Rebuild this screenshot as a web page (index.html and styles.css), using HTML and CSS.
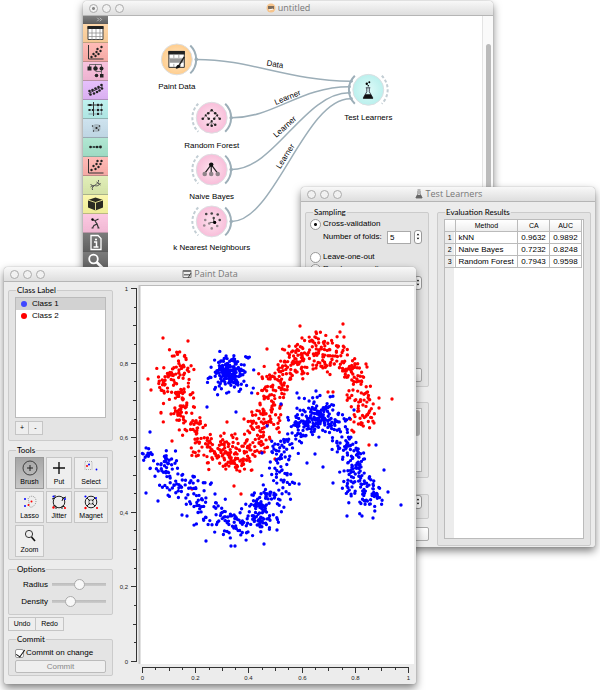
FILE: index.html
```
<!DOCTYPE html>
<html lang="en">
<head>
<meta charset="utf-8">
<title>untitled</title>
<link rel="stylesheet" href="styles.css">
</head>
<body>
<main class="desktop">

<section class="window window-canvas">
  <header class="titlebar">
    <div class="lights"><i class="edited"></i><i></i><i></i></div>
    <h1><svg class="title-icon" viewBox="0 0 10 10"><circle cx="5" cy="5" r="4.5" fill="#f6c48c"/><path d="M2 3h6v3H2z" fill="#7d6c5c"/><path d="M3 7l4-1" stroke="#fff"/></svg>untitled</h1>
  </header>
  <div class="canvas-body">
    <nav class="toolbox">
      <button class="expand" aria-label="Expand"><svg viewBox="0 0 24 8"><path d="M14 2l2 2-2 2M17 2l2 2-2 2" fill="none" stroke="#ccc"/></svg></button>
      <button class="orange" aria-label="Data table"><svg viewBox="0 0 24 18"><path d="M4.500 2.500h15v13h-15z" fill="#fff" stroke="#444"/><path d="M4 2h16v3H4z" fill="#222"/><path d="M4 9h16M4 12.500h16M8.500 5v11M12.500 5v11M16.500 5v11" stroke="#888" stroke-width=".7"/></svg></button>
      <button class="red" aria-label="Scatter"><svg viewBox="0 0 24 18"><path d="M5 2v14h15" fill="none" stroke="#333"/><g class="dots"><circle cx="8" cy="14" r="1.200"/><circle cx="10" cy="11" r="1.200"/><circle cx="12" cy="13" r="1.200"/><circle cx="13" cy="9" r="1.200"/><circle cx="15" cy="11" r="1.200"/><circle cx="14" cy="6" r="1.200"/><circle cx="17" cy="8" r="1.200"/><circle cx="18" cy="4" r="1.200"/></g></svg></button>
      <button class="pink" aria-label="Tree"><svg viewBox="0 0 24 18"><path d="M6 5V2.500h12V5M12 2v4M12 9.500h6v4M18 6v4" fill="none" stroke="#555" stroke-width=".8"/><g class="dots"><path d="M4 4.500h4v4H4zM16.500 12h3.500v3.500h-3.500z"/><circle cx="12" cy="6.500" r="2.200"/><circle cx="18" cy="6.500" r="2"/><circle cx="13" cy="13.500" r="1.800"/></g></svg></button>
      <button class="violet" aria-label="Regression"><svg viewBox="0 0 24 18"><path d="M5 12.500L19 5.500" stroke="#222" stroke-width=".8"/><g class="dots"><circle cx="6" cy="10" r="1.300"/><circle cx="7" cy="13.500" r="1.300"/><circle cx="9" cy="9" r="1.300"/><circle cx="10.500" cy="12.500" r="1.300"/><circle cx="12" cy="7.500" r="1.300"/><circle cx="13.500" cy="11" r="1.300"/><circle cx="15" cy="6" r="1.300"/><circle cx="16" cy="9.500" r="1.300"/><circle cx="18" cy="4" r="1.300"/><circle cx="18.500" cy="7.500" r="1.300"/></g></svg></button>
      <button class="cyan" aria-label="Distances"><svg viewBox="0 0 24 18"><path d="M4 5h15M10 2v14" stroke="#333"/><path d="M5 10h14M5 14h14M14.500 3v12M18 3v12" stroke="#556" stroke-width=".5"/><g class="dots"><path d="M5 4h3v2H5zM8.500 9h2v2h-2zM13.500 4h2v2h-2zM17 4h2v2h-2zM13.500 9h2v2h-2zM17 9h2v2h-2zM13.500 13h2v2h-2zM5 9h2v2H5z"/></g></svg></button>
      <button class="blue" aria-label="Clusters"><svg viewBox="0 0 24 18"><circle cx="13" cy="9" r="4" fill="#a9bac4"/><g class="dots"><circle cx="9" cy="7" r=".7"/><circle cx="10" cy="12" r=".7"/><circle cx="13" cy="9" r="1.100"/><circle cx="16" cy="7" r=".8"/><circle cx="15" cy="11" r=".7"/></g></svg></button>
      <button class="green" aria-label="Sequence"><svg viewBox="0 0 24 18"><path d="M7 9h10" stroke="#366" stroke-width=".8"/><g class="dots"><circle cx="7" cy="9" r="1.300"/><circle cx="10.500" cy="9" r=".9"/><circle cx="13.500" cy="9" r="1.300"/><circle cx="17" cy="9" r="1.400"/></g></svg></button>
      <button class="red" aria-label="Plot"><svg viewBox="0 0 24 18"><path d="M5 2v14h15" fill="none" stroke="#333"/><g class="dots"><circle cx="8" cy="13" r="1.200"/><circle cx="10" cy="9" r="1.200"/><circle cx="12" cy="12" r="1.200"/><circle cx="13" cy="7" r="1.200"/><circle cx="15" cy="10" r="1.200"/><circle cx="14" cy="4" r="1.200"/><circle cx="17" cy="7" r="1.200"/><circle cx="18" cy="4" r="1.200"/></g></svg></button>
      <button class="lime" aria-label="Genes"><svg viewBox="0 0 24 18"><path d="M7 11c4-4 6 2 10-4M9 14c-2-5 7-5 6-10M7 8l3 3M13 6l4 3" fill="none" stroke="#555" stroke-width="1"/></svg></button>
      <button class="yellow" aria-label="Box"><svg viewBox="0 0 24 18"><path d="M4.500 5L12 2.500 19.500 5v7.500L12 15.500l-7.500-3z" fill="#2a2a22"/><path d="M4.500 5l7.500 2.500L19.500 5M12 7.500v8" fill="none" stroke="#f0ec9a" stroke-width=".9"/></svg></button>
      <button class="rose" aria-label="Prototypes"><svg viewBox="0 0 24 18"><path d="M9 6l3 .5 3-1.500M11.500 7l2 3-3 1.500-1.500 2.500M13.500 10l1.500 4M8 14h2M14 14h2" fill="none" stroke="#333" stroke-width="1.200"/><circle cx="9" cy="5.500" r="1.200"/></svg></button>
      <button class="dark" aria-label="Information"><svg viewBox="0 0 24 18"><path d="M7.500 2.500h7l3 3v11h-10z" fill="none" stroke="#fff" stroke-width="1.300"/><path d="M10.500 9H13v4.500M10 14h5" fill="none" stroke="#fff" stroke-width="1.500"/><circle cx="12.500" cy="6.500" r="1.100" fill="#fff"/></svg></button>
      <button class="dark" aria-label="Search"><svg viewBox="0 0 24 18"><circle cx="10" cy="7" r="4.300" fill="none" stroke="#fff" stroke-width="1.800"/><path d="M13 10l6 6" stroke="#fff" stroke-width="2.600"/></svg></button>
    </nav>
    <svg class="scheme" viewBox="108 16 375 264" role="img" aria-label="Workflow">
      <defs>
        <radialGradient id="go"><stop offset="0" stop-color="#ffe9cb"/><stop offset="1" stop-color="#ffcd8d"/></radialGradient>
        <radialGradient id="gp"><stop offset="0" stop-color="#fde4ef"/><stop offset="1" stop-color="#f8bdd9"/></radialGradient>
        <radialGradient id="gc"><stop offset="0" stop-color="#dffaf8"/><stop offset="1" stop-color="#baf0ed"/></radialGradient>
      </defs>
      <g class="links">
        <path d="M197 59.500C250 59.500 290 81 351 81.500"/>
        <path d="M232 118C275 118 300 87 350 87"/>
        <path d="M232 170C275 170 305 93 350 93"/>
        <path d="M232 222C275 222 305 99 351 99"/>
      </g>
      <g class="node-label">
        <text x="275" y="67" transform="rotate(9 275 67)">Data</text>
        <text x="289" y="100" transform="rotate(-22 289 100)">Learner</text>
        <text x="287" y="129" transform="rotate(-42 287 129)">Learner</text>
        <text x="288" y="158" transform="rotate(-58 288 158)">Learner</text>
      </g>
      <g class="disc">
        <circle cx="177" cy="59.500" r="15.500" fill="url(#go)"/>
        <circle cx="212" cy="118" r="15.500" fill="url(#gp)"/>
        <circle cx="212" cy="170" r="15.500" fill="url(#gp)"/>
        <circle cx="212" cy="222" r="15.500" fill="url(#gp)"/>
        <circle cx="369" cy="90" r="15.500" fill="url(#gc)"/>
      </g>
      <g class="arc">
        <path d="M190.500 45.500a19.500 19.500 0 0 1 0 28"/><path d="M225.500 104a19.500 19.500 0 0 1 0 28"/><path d="M225.500 156a19.500 19.500 0 0 1 0 28"/><path d="M225.500 208a19.500 19.500 0 0 1 0 28"/><path d="M355.500 76a19.500 19.500 0 0 0 0 28"/>
      </g>
      <g class="arc dashed">
        <path d="M198.500 104a19.500 19.500 0 0 0 0 28"/><path d="M198.500 156a19.500 19.500 0 0 0 0 28"/><path d="M198.500 208a19.500 19.500 0 0 0 0 28"/><path d="M382.500 76a19.500 19.500 0 0 1 0 28"/>
      </g>
      <g class="ports"><circle cx="196.500" cy="59.500" r="1.800"/><circle cx="231.500" cy="118" r="1.800"/><circle cx="231.500" cy="170" r="1.800"/><circle cx="231.500" cy="222" r="1.800"/><circle cx="352" cy="81.500" r="1.500"/><circle cx="350" cy="87" r="1.500"/><circle cx="350" cy="93" r="1.500"/><circle cx="352" cy="99" r="1.500"/></g>
      <g>
        <path d="M169 51.500h15.500v16H169z" fill="#fff" stroke="#333"/><path d="M168.500 51h16.500v3.500h-16.500z" fill="#222"/><path d="M169.500 59h14.500v4h-14.500z" fill="#999"/><path d="M169 58.500h15M174 54v4M179 54v4M174 64v3" stroke="#888" stroke-width=".7"/><path d="M184.500 57l-5 8" stroke="#222" stroke-width="1.500"/><path d="M176 69c0-2 1-4 3-4l2 1c-1 2-3 3-5 3z" fill="#111"/>
      </g>
      <g fill="none" stroke="#555" stroke-width=".7"><path d="M209 113l3-2.500 3 2.500M203 119l3-3 3 3M214 119l3-3 3 3M208 125l3.500-3 3.500 3M211.500 122v4"/></g>
      <g class="dots"><circle cx="212" cy="110.500" r="1.200"/><circle cx="208.500" cy="113.500" r="1.300"/><circle cx="215.500" cy="113.500" r="1.300"/><circle cx="206" cy="115.500" r="1.100"/><circle cx="203" cy="119" r="1.300"/><circle cx="209" cy="119" r="1.300"/><circle cx="217.500" cy="115.500" r="1.100"/><circle cx="214.500" cy="119" r="1.300"/><circle cx="220" cy="119" r="1.300"/><circle cx="212" cy="121.500" r="1.100"/><circle cx="208" cy="125" r="1.300"/><circle cx="212" cy="126" r="1.300"/><circle cx="215.500" cy="125" r="1.300"/></g>
      <path d="M211.500 165l-6 8M211.500 165v8M211.500 165l6 8" stroke="#222" stroke-width="1.200"/><circle cx="211.500" cy="165" r="2.200" fill="#111"/><g fill="#8f8389"><circle cx="205" cy="174.500" r="2.300"/><circle cx="211.500" cy="174.500" r="2.300"/><circle cx="218" cy="174.500" r="2.300"/></g>
      <path d="M214 218v5h-4" fill="none" stroke="#333" stroke-width=".8"/><g fill="#444"><circle cx="206.500" cy="214.500" r="1.300"/><circle cx="212" cy="214" r="1.300"/><circle cx="218" cy="215" r="1.300"/><circle cx="220" cy="220.500" r="1.300"/><circle cx="214" cy="218.500" r="1.200"/></g><circle cx="215" cy="223" r="1.600"/><g fill="#94878d"><circle cx="205.500" cy="220.500" r="1.300"/><circle cx="209.500" cy="224" r="1.300"/><circle cx="204.500" cy="226" r="1.300"/><circle cx="212" cy="229" r="1.300"/><circle cx="217.500" cy="226.500" r="1.300"/></g>
      <path d="M366.500 88h4.500M367.500 88v4l-3.500 6h9.500l-3.500-6v-4" fill="none" stroke="#334" stroke-width=".9"/><path d="M366 94.500h5.500l2.500 4.500h-10.500z" fill="#111"/><circle cx="367.500" cy="84" r="1.200"/><circle cx="370" cy="82.500" r="1"/><circle cx="369" cy="86" r=".8"/>
      <g class="node-label">
        <text x="177" y="89">Paint Data</text><text x="212" y="148">Random Forest</text><text x="212" y="200">Naive Bayes</text><text x="212" y="251">k Nearest Neighbours</text><text x="369" y="120">Test Learners</text>
      </g>
    </svg>
    <div class="scrollbar"><div class="thumb"></div></div>
  </div>
</section>

<section class="window window-test">
  <header class="titlebar">
    <div class="lights"><i></i><i></i><i></i></div>
    <h2><svg class="title-icon" viewBox="0 0 10 10"><path d="M3.500 1h3M4 2v3L2 9h6L6 5V2" fill="none" stroke="#777"/><path d="M3 6h4l1.500 3h-7z" fill="#666"/></svg>Test Learners</h2>
  </header>
  <div class="test-body">
    <div class="test-options">
      <fieldset class="sampling">
        <legend>Sampling</legend>
        <label class="option"><input type="radio" name="sampling" checked>Cross-validation</label>
        <div class="folds"><label for="folds">Number of folds:</label><input id="folds" type="text" value="5"><button class="spin" aria-label="Change folds"><svg viewBox="0 0 7 13"><path d="M3.500 3l1.500 2H2zM3.500 10L2 8h3z"/></svg></button></div>
        <label class="option"><input type="radio" name="sampling">Leave-one-out</label>
        <label class="option"><input type="radio" name="sampling">Random sampling</label>
        <button class="spin" aria-label="Change repeats"><svg viewBox="0 0 7 13"><path d="M3.500 3l1.500 2H2zM3.500 10L2 8h3z"/></svg></button>
        <button class="push apply" aria-label="Apply"></button>
      </fieldset>
      <fieldset class="target"><div class="target-list"><div class="thumb"></div></div></fieldset>
      <fieldset class="criteria"><button class="spin" aria-label="Change class"><svg viewBox="0 0 7 13"><path d="M3.500 3l1.500 2H2zM3.500 10L2 8h3z"/></svg></button></fieldset>
      <button class="push" aria-label="Report"></button>
    </div>
    <fieldset class="results">
      <legend>Evaluation Results</legend>
      <div class="table-frame">
        <table>
          <thead><tr><th class="num"></th><th>Method</th><th>CA</th><th>AUC</th></tr></thead>
          <tbody>
            <tr><th class="num">1</th><td>kNN</td><td>0.9632</td><td>0.9892</td></tr>
            <tr><th class="num">2</th><td>Naive Bayes</td><td>0.7232</td><td>0.8248</td></tr>
            <tr><th class="num">3</th><td>Random Forest</td><td>0.7943</td><td>0.9598</td></tr>
          </tbody>
        </table>
      </div>
    </fieldset>
  </div>
</section>

<section class="window window-paint">
  <header class="titlebar">
    <div class="lights"><i></i><i></i><i></i></div>
    <h2><svg class="title-icon" viewBox="0 0 10 10"><path d="M1 1.500h8v7H1z" fill="#eee" stroke="#777"/><path d="M1 1h8v2H1zM2 5h6v1.500H2z" fill="#777"/><path d="M9 4L6 9" stroke="#444"/></svg>Paint Data</h2>
  </header>
  <div class="paint-body">
    <aside class="controls">
      <fieldset class="classes">
        <legend>Class Label</legend>
        <ul><li class="selected"><span class="dot dot-blue"></span>Class 1</li><li><span class="dot dot-red"></span>Class 2</li></ul>
        <div class="joined"><button>+</button><button>-</button></div>
      </fieldset>
      <fieldset class="tools">
        <legend>Tools</legend>
        <button class="active"><svg viewBox="0 0 16 16"><circle cx="8" cy="8" r="7" fill="none" stroke="#333" stroke-width=".9"/><path d="M8 5v6M5 8h6" stroke="#222"/></svg>Brush</button>
        <button><svg viewBox="0 0 16 16"><path d="M8 2v12M2 8h12" stroke="#111" stroke-width="1.400"/></svg>Put</button>
        <button><svg viewBox="0 0 16 16"><path d="M2 1.500h7v8H2z" fill="none" stroke="#aaa" stroke-dasharray="1 1"/><circle cx="4" cy="6" r="1" fill="red"/><circle cx="6" cy="4.500" r="1" fill="blue"/><circle cx="13.500" cy="9.500" r=".9" fill="blue"/></svg>Select</button>
        <button><svg viewBox="0 0 16 16"><path d="M6 5c1-4 8-4 8 2 0 4-4 7-6 6-2-2 0-4-2-8z" fill="none" stroke="#999" stroke-dasharray="1 1"/><g fill="blue"><circle cx="3" cy="5" r="1"/><circle cx="3" cy="12" r="1"/></g><g fill="red"><circle cx="9.500" cy="7.500" r="1"/><circle cx="6.500" cy="11" r="1"/></g></svg>Lasso</button>
        <button><svg viewBox="0 0 16 16"><circle cx="8" cy="8" r="5.800" fill="none" stroke="#222"/><path d="M1 5l3-1V1M15 3l-3 1-1 3M2 12h3v3M14 13l-3-1v3" fill="none" stroke="#222"/><g fill="blue"><circle cx="2.500" cy="2.500" r="1.100"/><circle cx="14" cy="5" r="1"/></g><g fill="red"><circle cx="2.500" cy="13.500" r="1.200"/><circle cx="14" cy="14" r="1.100"/></g></svg>Jitter</button>
        <button><svg viewBox="0 0 16 16"><circle cx="8" cy="8" r="5.800" fill="none" stroke="#222"/><path d="M4 4l3 3M12 4L9 7M4 12l3-3M12 12L9 9" fill="none" stroke="#222"/><path d="M7 5v2H5M9 5v2h2M5 9h2v2M11 9H9v2" fill="none" stroke="#222" stroke-width=".6"/><g fill="blue"><circle cx="2.500" cy="2.500" r="1.100"/><circle cx="13" cy="4" r="1"/></g><g fill="red"><circle cx="2.500" cy="14" r="1.200"/><circle cx="14" cy="14" r="1.100"/></g></svg>Magnet</button>
        <button><svg viewBox="0 0 16 16"><circle cx="7" cy="6" r="3.600" fill="none" stroke="#333"/><path d="M9.500 9l3.500 4" stroke="#111" stroke-width="1.700"/></svg>Zoom</button>
      </fieldset>
      <fieldset class="options">
        <legend>Options</legend>
        <label for="radius">Radius</label><input id="radius" type="range" min="0" max="100" value="50">
        <label for="density">Density</label><input id="density" type="range" min="0" max="100" value="30">
      </fieldset>
      <div class="joined history"><button>Undo</button><button>Redo</button></div>
      <fieldset class="commit">
        <legend>Commit</legend>
        <label><input type="checkbox" checked>Commit on change</label>
        <button class="push" disabled>Commit</button>
      </fieldset>
    </aside>
    <svg class="plot" id="plot" viewBox="114 282 302 402" role="img" aria-label="Painted data">
      <path d="M139 285h275v379H139z" fill="#fff"/>
      <path d="M139 285.500h275" stroke="#bbb"/>
      <path d="M139.500 285v379" stroke="#c4c4c4" stroke-width="2"/>
    </svg>
  </div>
</section>

</main>
<script src="plot.js"></script>
</body>
</html>
```
FILE: styles.css
```
* { box-sizing: border-box; }
body { margin: 0; background: #fff; color: #000; font-family: "Liberation Sans", Arial, sans-serif; font-size: 8px; line-height: 10px; }
button, input { font: inherit; color: inherit; margin: 0; padding: 0; }
button svg { display: block; }
.desktop { position: relative; min-height: 690px; height: 100vh; overflow: hidden; }

.window { position: absolute; display: flex; flex-direction: column; background: #ececec; border-radius: 4px 4px 2px 2px; box-shadow: 0 0 1px #777, 0 4px 9px rgba(0, 0, 0, .5); overflow: hidden; }
.window-canvas { top: 1px; left: 83px; right: 107px; height: 278px; background: #fff; }
.window-test { top: 187px; left: 301px; right: 5px; bottom: 143px; }
.window-paint { top: 267px; left: 4px; right: 184px; bottom: 6px; }

.titlebar { display: flex; align-items: center; flex: none; height: 15px; padding: 0 6px; background: linear-gradient(#f8f8f8, #dedede); border-bottom: 1px solid #b5b5b5; }
.titlebar h1, .titlebar h2 { display: flex; align-items: center; justify-content: center; flex: 1; gap: 2px; margin: 0 38px 0 0; color: #777; font: 9px/12px "Open Sans", sans-serif; }
.title-icon { width: 10px; height: 10px; }
.lights { display: flex; flex: none; gap: 4px; width: 38px; }
.lights i { width: 9px; height: 9px; border: 1px solid #aaa; border-radius: 50%; background: #f1f1f1; }
.lights .edited { background: radial-gradient(#888 1px, #f1f1f1 2px); }

.canvas-body { display: flex; flex: 1; min-height: 0; }
.toolbox { flex: none; width: 25px; }
.toolbox button { display: block; width: 100%; height: 19px; border: 0; border-bottom: 1px solid rgba(0, 0, 0, .25); background-image: linear-gradient(rgba(255, 255, 255, .15), rgba(0, 0, 0, .04)); }
.toolbox .expand { height: 8px; background-color: #686868; }
.toolbox svg { width: 100%; height: 100%; }
.dots { fill: #222; }
.orange { background-color: #ffd09a; }
.red { background-color: #ffb0ab; }
.pink { background-color: #f7b9d8; }
.violet { background-color: #e2b6fb; }
.cyan { background-color: #b5efec; }
.blue { background-color: #c6deec; }
.green { background-color: #a4e3cb; }
.lime { background-color: #dcebad; }
.yellow { background-color: #f9f69f; }
.rose { background-color: #fbbfdc; }
.dark { background-color: #646464; }
.scheme { flex: 1; min-width: 0; align-self: flex-start; }
.links, .arc { fill: none; stroke: #9caeb8; stroke-width: 1.5; }
.arc { stroke-width: 2; }
.dashed { stroke: #c3ced4; stroke-dasharray: 3 2; }
.ports { fill: #9caeb8; }
.disc { stroke: #dcdfe2; stroke-width: 1; }
.node-label { font-size: 8px; text-anchor: middle; fill: #000; }
.scrollbar { flex: none; width: 11px; padding: 28px 3px 0; background: #fafafa; border-left: 1px solid #e4e4e4; }
.thumb { width: 5px; height: 100%; border-radius: 3px; background: #bbb; }

fieldset { min-width: 0; margin: 0; padding: 2px 6px 6px; background: #e4e4e4; border: 1px solid #cbcbcb; border-radius: 2px; }
legend { margin-left: 1px; padding: 0 1px; font: 8px/10px Lato, sans-serif; }
.push { display: block; height: 14px; border: 1px solid #aaa; border-radius: 2px; background: linear-gradient(#fff, #eee); }
.spin { width: 8px; height: 14px; border: 1px solid #999; border-radius: 3px; background: #fff; }

.test-body { display: flex; flex: 1; gap: 8px; padding: 5px 4px; }
.test-options { display: flex; flex-direction: column; flex: 0 0 124px; }
.sampling { height: 180px; padding-top: 1px; }
.option { display: flex; align-items: center; gap: 2px; height: 12px; }
.option input { appearance: none; width: 11px; height: 11px; margin-left: -2px; border: 1px solid #999; border-radius: 50%; background: #fff; }
.option input:checked { background: radial-gradient(#111 1px, #fff 2px); }
.folds { display: flex; align-items: center; gap: 3px; height: 14px; padding-left: 11px; margin-bottom: 7px; }
.folds input { width: 24px; height: 13px; margin-left: auto; padding: 0 2px; border: 1px solid #aaa; background: #fff; }
.sampling > .spin { display: block; margin: 1px 0 78px auto; }
.apply { width: 60px; margin-left: auto; }
.target { height: 76px; margin-top: 15px; }
.target-list { height: 64px; margin-top: 3px; padding: 1px; background: #fff; border: 1px solid #bbb; }
.target-list .thumb { width: 6px; height: 26px; margin-left: auto; }
.criteria { display: flex; justify-content: flex-end; align-items: center; height: 25px; margin-top: 16px; padding: 0 6px; }
.test-options > .push { margin-top: 8px; }
.results { display: flex; flex: 1; flex-direction: column; }
.table-frame { height: 320px; background: linear-gradient(90deg, #ececec 9px, #fff 9px); border: 1px solid #bbb; }
table { width: 137px; border-collapse: collapse; }
th, td { height: 12px; padding: 0 3px; border: 1px solid #bbb; border-width: 0 1px 1px 0; text-align: left; white-space: nowrap; line-height: 11px; }
td { background: #fff; }
thead th { height: 11px; background: linear-gradient(#fff, #eee); font-size: 7px; font-weight: normal; text-align: center; }
.num { width: 10px; padding: 0; text-align: center; font-size: 7px; font-weight: normal; }

.paint-body { display: flex; flex: 1; min-height: 0; }
.controls { flex: none; width: 110px; padding: 3px 0 0 4px; }
.controls fieldset { width: 105px; }
.classes { height: 156px; }
ul { height: 121px; margin: 0 0 3px; padding: 0; list-style: none; background: #fff; border: 1px solid #bbb; }
li { display: flex; align-items: center; gap: 5px; height: 12px; padding-left: 5px; }
.selected { background: #d2d2d2; }
.dot { width: 6px; height: 6px; border-radius: 50%; }
.dot-blue { background: #3f48ff; }
.dot-red { background: #f00; }
.joined { display: flex; }
.joined button { min-width: 14px; height: 14px; border: 1px solid #c5c5c5; background: #eee; font-size: 7px; }
.joined button + button { border-left: 0; }
.tools { display: grid; grid-template-columns: 29px 26px 34px; gap: 2px; margin-top: 4px; height: 115px; grid-auto-rows: 32px; }
.tools button { display: flex; flex-direction: column; align-items: center; gap: 1px; padding-top: 2px; border: 1px solid #c6c6c6; background: #eee; font-size: 7px; line-height: 9px; }
.tools .active { background: linear-gradient(#a6a6a6, #c8c8c8); border-color: #999; }
.tools svg { width: 16px; height: 16px; }
.options { display: grid; grid-template-columns: 33px 54px; grid-auto-rows: 17px; align-items: center; column-gap: 4px; margin-top: 4px; height: 51px; }
.options label { text-align: right; }
.options input { appearance: none; width: 54px; height: 11px; background: linear-gradient(transparent 4px, #bbb 4px, #ccc 7px, transparent 7px); }
.options input::-webkit-slider-thumb { appearance: none; width: 11px; height: 11px; border: 1px solid #aaa; border-radius: 50%; background: #f8f8f8; }
.history { margin-top: 2px; }
.history button { width: 28px; }
.commit { margin-top: 3px; height: 42px; }
.commit label { display: flex; align-items: center; gap: 2px; height: 14px; white-space: nowrap; }
.commit input { appearance: none; width: 9px; height: 9px; border: 1px solid #999; border-radius: 2px; background: #fff; position: relative; }
.commit input::after { content: ""; position: absolute; left: 2px; top: -2px; width: 4px; height: 8px; border: solid #111; border-width: 0 1px 1px 0; transform: rotate(35deg); }
.commit .push { width: 100%; height: 13px; color: #888; background: #efefef; border-color: #bbb; }
.plot { flex: 1; min-width: 0; height: 100%; }
.axis { stroke: #333; stroke-width: 1; }
.tick-label { font-size: 6px; fill: #222; }
```
FILE: plot.js
```
const plot = document.getElementById('plot');
const NS = 'http://www.w3.org/2000/svg';

function add(tag, attrs, text) {
  const el = document.createElementNS(NS, tag);
  for (const key in attrs) el.setAttribute(key, attrs[key]);
  if (text !== undefined) el.textContent = text;
  plot.appendChild(el);
}

// Axes
add('path', { class: 'axis', d: 'M136.5 288V662M142 667.5H409', fill: 'none' });
for (let i = 0; i <= 20; i++) {
  const y = Math.round(661 - i * 18.65) + 0.5;
  const x = Math.round(142 + i * 13.3) + 0.5;
  const len = i % 4 === 0 ? 6 : i % 2 === 0 ? 4 : 3;
  add('path', { class: 'axis', d: `M137 ${y}h-${len}M${x} 667v${len}` });
  if (i % 4 === 0) {
    const v = String(i / 20);
    add('text', { class: 'tick-label', x: 128, y: y + 2, 'text-anchor': 'end' }, v.replace('.', ','));
    add('text', { class: 'tick-label', x, y: 680, 'text-anchor': 'middle' }, v);
  }
}

let seed = 7;
function random() {
  seed = (seed + 0x6D2B79F5) | 0;
  let t = Math.imul(seed ^ (seed >>> 15), 1 | seed);
  t = (t + Math.imul(t ^ (t >>> 7), 61 | t)) ^ t;
  return ((t ^ (t >>> 14)) >>> 0) / 4294967296;
}
function normal() {
  let v;
  do {
    v = Math.sqrt(-2 * Math.log(random() + 1e-9)) * Math.cos(2 * Math.PI * random());
  } while (Math.abs(v) > 2.1);
  return v;
}

// Brush strokes: x, y, spread x, spread y, number of points
const red = [
  [178,362,7,8,26],[174,378,10,8,34],[179,395,9,8,36],[182,412,10,7,32],[192,427,9,6,30],
  [203,443,7,8,26],[220,455,9,8,34],[233,452,11,9,60],[240,463,8,6,26],[255,443,8,8,32],
  [263,430,8,9,32],[266,410,8,10,38],[272,390,8,10,38],[280,376,8,9,36],[297,364,9,9,50],
  [302,355,8,6,18],[320,350,10,9,42],[332,360,9,9,46],[351,371,7,7,34],[357,390,7,10,26],
  [364,403,7,8,24],[361,420,6,6,22]
];
const blue = [
  [230,373,8,7,110],[230,373,12,12,80],[148,455,4,4,9],[160,455,9,8,18],[166,470,8,9,26],
  [175,485,9,8,24],[190,490,8,8,22],[205,497,9,10,20],[212,516,10,8,28],[235,522,10,9,46],
  [255,515,9,10,34],[264,500,8,9,40],[266,521,7,6,28],[278,490,8,11,26],[281,465,6,9,28],
  [285,448,8,8,26],[302,425,8,8,60],[318,411,10,8,46],[320,423,8,8,56],[335,423,9,10,30],
  [345,447,7,6,34],[355,462,5,8,40],[358,482,9,8,46],[372,492,6,8,28],[361,503,8,6,12],
  [292,482,5,9,6]
];
const redSingles = [
  [163,338],[188,341],[148,379],[151,390],[392,399],[343,324],[300,326],[316,332],[340,332],
  [344,337],[267,349],[302,338],[366,364],[367,367],[234,486],[241,494],[227,422],[244,419],
  [379,408],[379,398],[374,423],[369,445],[275,459],[192,489],[161,413],[172,441],[328,392],[333,392]
];
const blueSingles = [
  [150,432],[146,493],[158,501],[207,407],[236,412],[206,541],[231,546],[235,546],[264,544],
  [277,530],[376,445],[384,470],[388,492],[401,505],[373,518],[347,516],[333,483],[323,467],
  [307,463],[315,454],[316,391],[297,393],[299,398],[182,515],[187,516],[362,516],[267,426],
  [262,453],[354,410],[281,404]
];

function paint(strokes, singles, colour) {
  let d = '';
  const dot = (x, y) => { d += `M${x.toFixed(1)} ${y.toFixed(1)}h0`; };
  for (const [x, y, sx, sy, n] of strokes) {
    for (let i = 0; i < n; i++) dot(Math.max(x + normal() * sx, 142), y + normal() * sy);
  }
  for (const [x, y] of singles) dot(x, y);
  add('path', { d, fill: 'none', stroke: colour, 'stroke-width': 3.4, 'stroke-linecap': 'round' });
}
paint(red, redSingles, '#f00');
paint(blue, blueSingles, '#00f');
```
